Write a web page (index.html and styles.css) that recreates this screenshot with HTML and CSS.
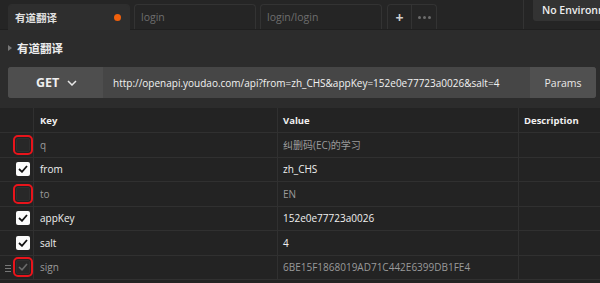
FILE: index.html
```html
<!DOCTYPE html>
<html>
<head>
<meta charset="utf-8">
<link rel="stylesheet" href="styles.css">
</head>
<body>
<div class="app">
  <div class="topbar">
    <div class="tabs">
      <div class="tab active"><span class="tab-title">有道翻译</span><span class="dot"></span></div>
      <div class="tab"><span class="tab-title muted">login</span></div>
      <div class="tab"><span class="tab-title muted">login/login</span></div>
      <div class="tab-actions">
        <div class="act plus">+</div>
        <div class="act more"><span></span><span></span><span></span></div>
      </div>
    </div>
    <div class="env-area">
      <div class="env">No Environm</div>
    </div>
  </div>
  <div class="main">
    <div class="req-name"><span class="caret"></span><span>有道翻译</span></div>
    <div class="urlbar">
      <div class="method">GET <svg width="10" height="6" viewBox="0 0 10 6"><path d="M1 1 L5 5 L9 1" fill="none" stroke="#e8e8e8" stroke-width="1.5"/></svg></div>
      <div class="url">http://openapi.youdao.com/api?from=zh_CHS&amp;appKey=152e0e77723a0026&amp;salt=4</div>
      <div class="params">Params</div>
    </div>
    <div class="table">
      <div class="row head">
        <div class="cell chk"></div>
        <div class="cell">Key</div>
        <div class="cell">Value</div>
        <div class="cell">Description</div>
      </div>
      <div class="row off">
        <div class="cell chk"><span class="box mark"></span></div>
        <div class="cell">q</div>
        <div class="cell">纠删码(EC)的学习</div>
        <div class="cell"></div>
      </div>
      <div class="row">
        <div class="cell chk"><span class="box on"><svg width="10" height="8" viewBox="0 0 10 8"><path d="M1 4 L4 6.8 L9 1" fill="none" stroke="#111" stroke-width="1.8"/></svg></span></div>
        <div class="cell">from</div>
        <div class="cell">zh_CHS</div>
        <div class="cell"></div>
      </div>
      <div class="row off">
        <div class="cell chk"><span class="box mark"></span></div>
        <div class="cell">to</div>
        <div class="cell">EN</div>
        <div class="cell"></div>
      </div>
      <div class="row">
        <div class="cell chk"><span class="box on"><svg width="10" height="8" viewBox="0 0 10 8"><path d="M1 4 L4 6.8 L9 1" fill="none" stroke="#111" stroke-width="1.8"/></svg></span></div>
        <div class="cell">appKey</div>
        <div class="cell">152e0e77723a0026</div>
        <div class="cell"></div>
      </div>
      <div class="row">
        <div class="cell chk"><span class="box on"><svg width="10" height="8" viewBox="0 0 10 8"><path d="M1 4 L4 6.8 L9 1" fill="none" stroke="#111" stroke-width="1.8"/></svg></span></div>
        <div class="cell">salt</div>
        <div class="cell">4</div>
        <div class="cell"></div>
      </div>
      <div class="row off">
        <div class="cell chk"><span class="handle"><svg width="6" height="7" viewBox="0 0 6 7"><path d="M0 0.5 H6 M0 3.5 H6 M0 6.5 H6" stroke="#777" stroke-width="1"/></svg></span><span class="box mark dim"><svg width="10" height="8" viewBox="0 0 10 8"><path d="M1 4 L4 6.8 L9 1" fill="none" stroke="#6a6a6a" stroke-width="1.6"/></svg></span></div>
        <div class="cell">sign</div>
        <div class="cell">6BE15F1868019AD71C442E6399DB1FE4</div>
        <div class="cell"></div>
      </div>
    </div>
  </div>
</div>
</body>
</html>
```
FILE: styles.css
```css
* { box-sizing: border-box; }
html, body { margin: 0; padding: 0; }
body {
  width: 600px;
  height: 283px;
  overflow: hidden;
  background: #2c2c2c;
  font-family: "Open Sans", "Noto Sans CJK SC", sans-serif;
  color: #e6e6e6;
}
.app { display: flex; flex-direction: column; height: 283px; }

.topbar {
  height: 30px;
  background: #252525;
  border-bottom: 1px solid #1f1f1f;
  display: flex;
  justify-content: space-between;
}
.tabs {
  display: flex;
  align-items: flex-end;
  padding-left: 8px;
  gap: 4px;
}
.tab {
  width: 122px;
  height: 25px;
  border: 1px solid #333;
  border-bottom: none;
  border-radius: 4px 4px 0 0;
  display: flex;
  align-items: center;
  justify-content: space-between;
  padding: 0 8px 0 6px;
  font-size: 10.5px;
  background: #252525;
  flex-shrink: 0;
}
.tab.active { background: #2e2e2e; border-color: #2e2e2e; height: 26px; margin-bottom: -1px; }
.tab-title { font-weight: 600; color: #e0e0e0; }
.tab-title.muted { font-weight: 400; color: #6e6e6e; }
.dot { width: 7px; height: 7px; border-radius: 50%; background: #f0600c; }
.tab-actions {
  display: flex;
  height: 25px;
  border: 1px solid #333;
  border-bottom: none;
  border-radius: 4px 4px 0 0;
  margin-left: 1px;
}
.act { width: 24px; display: flex; align-items: center; justify-content: center; }
.plus { border-right: 1px solid #333; color: #cfcfcf; font-size: 14px; font-weight: 700; }
.more { gap: 2px; }
.more span { width: 3px; height: 3px; border-radius: 50%; background: #6c6c6c; }
.env-area {
  width: 77px;
  border-left: 1px solid #333;
  padding-left: 9px;
  height: 29px;
  flex-shrink: 0;
}
.env {
  height: 21px;
  background: #333;
  border-radius: 0 0 0 3px;
  padding-left: 9px;
  font-size: 10.5px;
  font-weight: 600;
  color: #eee;
  white-space: nowrap;
  line-height: 20px;
}

.main { flex: 1; display: flex; flex-direction: column; }
.req-name {
  height: 36px;
  display: flex;
  align-items: center;
  padding-left: 8px;
  font-size: 11.5px;
  font-weight: 700;
  color: #ececec;
  gap: 5px;
}
.caret {
  width: 0; height: 0;
  border-left: 4px solid #777;
  border-top: 3px solid transparent;
  border-bottom: 3px solid transparent;
}
.urlbar {
  margin: 1px 4px 0 8px;
  height: 31px;
  display: flex;
  border-radius: 3px;
  overflow: hidden;
  background: #464646;
}
.method {
  width: 95px;
  flex-shrink: 0;
  background: #4e4e4e;
  display: flex;
  align-items: center;
  padding-left: 28px;
  gap: 8px;
  font-size: 12.5px;
  font-weight: 700;
  color: #f0f0f0;
}
.url {
  flex: 1;
  min-width: 0;
  overflow: hidden;
  display: flex;
  align-items: center;
  padding-left: 10px;
  font-size: 10px;
  color: #f2f2f2;
  white-space: nowrap;
}
.params {
  width: 66px;
  flex-shrink: 0;
  background: #505050;
  display: flex;
  align-items: center;
  justify-content: center;
  font-size: 10.5px;
  color: #e8e8e8;
}

.table {
  margin-top: 10px;
  background: #232323;
  flex: 1;
}
.row {
  display: grid;
  grid-template-columns: 34px 244px 241px 1fr;
  height: 24.5px;
  border-bottom: 1px solid #303030;
  font-size: 10px;
}
.row.head { height: 25px; font-weight: 700; font-size: 9.5px; color: #f2f2f2; }
.cell {
  border-right: 1px solid #303030;
  display: flex;
  align-items: center;
  padding-left: 5px;
  color: #f0f0f0;
  white-space: nowrap;
  overflow: hidden;
}
.cell:last-child { border-right: none; }
.row .cell:nth-child(2) { padding-left: 6px; }
.row.off .cell { color: #9a9a9a; }
.cell.chk { padding-left: 16px; position: relative; overflow: visible; }
.box {
  width: 14px;
  height: 14px;
  border-radius: 2px;
  display: flex;
  align-items: center;
  justify-content: center;
}
.box.on { background: #fbfbfb; }
.box.mark {
  background: #282828;
  border: 1px solid #2f2f2f;
  outline: 2px solid #e8141b;
  outline-offset: 1px;
  border-radius: 2px;
}
.handle { position: absolute; left: 5px; top: 9px; display: flex; }
```
